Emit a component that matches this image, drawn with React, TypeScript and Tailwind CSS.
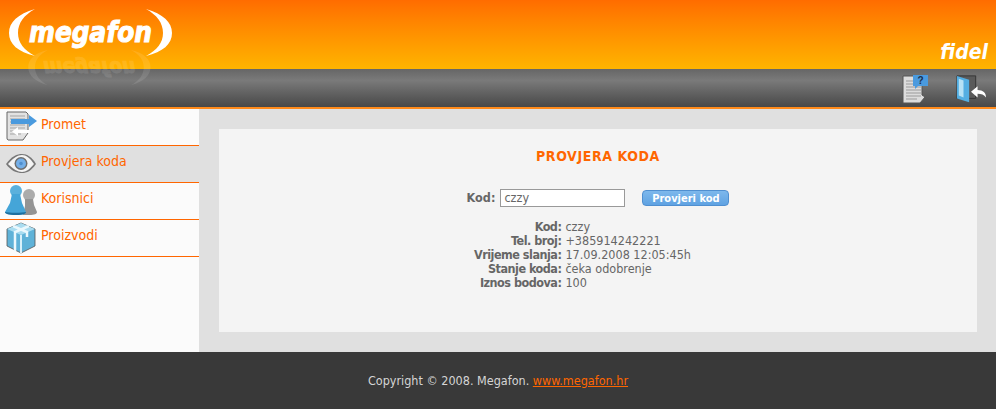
import React from "react";

const PrometIcon = () => (
  <svg width="32" height="32" viewBox="0 0 32 32">
    <path d="M2 1h19l2 2v19l-5 7H3a2 2 0 0 1-1-2z" fill="#e2e2e2" stroke="#666" strokeWidth="1" />
    <path d="M5 5h15M5 8h15M5 11h15M5 14h15M5 17h15M5 20h15M5 23h11" stroke="#a5a5a5" strokeWidth="1" />
    <path d="M7 9h18V5l8 6-8 6v-3H7z" fill="#4a9ade" transform="translate(-1 -1)" />
    <path d="M24 19H13v-3l-6 4.500 6 4.500v-3h11z" fill="#fff" />
  </svg>
);

const EyeIcon = () => (
  <svg width="32" height="22" viewBox="0 0 32 22">
    <path d="M1 11C7 3 12 1 17 1s10 3 14 10c-5 7-9 9-14 9S6 18 1 11z" fill="#777" />
    <path d="M3 11c5-6 10-9 14-9s8 3 12 9c-4 5-8 8-12 8s-9-3-14-8z" fill="#f4f4f4" />
    <circle cx="16" cy="10.500" r="6.500" fill="#6e6e6e" />
    <circle cx="16" cy="10.500" r="5" fill="#74afe8" />
    <circle cx="16" cy="10.500" r="1.800" fill="#4f8fce" />
  </svg>
);

const UsersIcon = () => (
  <svg width="32" height="32" viewBox="0 0 32 32">
    <circle cx="24" cy="10" r="6" fill="#ababab" />
    <path d="M20 14h8l1 6 3 7c0 2-2 3-8 3h-6l2-9z" fill="#949494" />
    <circle cx="11" cy="6" r="6" fill="#5ab0dc" />
    <path d="M7 9h8l2 9 4 9c0 2-3 3-10 3S0 29 0 27l5-9z" fill="#45a5d8" />
    <path d="M0 27c0 2 4 3 11 3s10-1 10-3c-3 1-18 1-21 0z" fill="#1d6f9f" />
  </svg>
);

const BoxIcon = () => (
  <svg width="32" height="32" viewBox="0 0 32 32">
    <path d="M16 1l14 6v17l-14 7-14-7V7z" fill="#5fb2d8" stroke="#555" strokeWidth="0.800" />
    <path d="M16 1l14 6-14 6L2 7z" fill="#a9dcf0" />
    <path d="M16 13v18" stroke="#d9f1fa" strokeWidth="2" />
    <path d="M8 4l14 6v5M24 4L10 10v19" stroke="#eaf8fd" strokeWidth="2.500" fill="none" />
  </svg>
);

const HelpIcon = () => (
  <svg width="26" height="30" viewBox="0 0 26 30">
    <path d="M1 2h19v19l3 2-5 6H1z" fill="#dcdcdc" stroke="#555" strokeWidth="1" />
    <path d="M4 7h8M4 10h8M4 13h15M4 16h15M4 19h15M4 22h15M4 25h11" stroke="#9a9a9a" strokeWidth="1" />
    <path d="M11 1h15v11H16l-3 3v-3h-2z" fill="#4a9ade" />
    <text x="18.500" y="10" fontSize="10" fontWeight="700" fill="#1c2f4c" textAnchor="middle" fontFamily="'Liberation Sans', sans-serif">?</text>
  </svg>
);

const ExitIcon = () => (
  <svg width="30" height="30" viewBox="0 0 32 30">
    <path d="M1 1h20v24H1z" fill="#5a5a5a" stroke="#333" strokeWidth="1" />
    <path d="M1 1l13 4v24L1 25z" fill="#53aee2" />
    <path d="M3 4l5 2v18l-5-2z" fill="#b6e2f6" />
    <path d="M32 24c0-5-3-8-9-8v-4l-7 6 7 6v-4c4 0 7 1 9 4z" fill="#fff" />
  </svg>
);

const Logo = ({ className }: { className: string }) => (
  <svg width="180" height="64" viewBox="0 0 180 64" className={className}>
    <path d="M35 9C18 14 9 22 9 33s9 19 26 23C24 50 18 43 18 33S24 15 35 9z" fill="#fff" />
    <path d="M146 9c17 5 26 13 26 24s-9 19-26 23c11-6 17-13 17-23s-6-18-17-24z" fill="#fff" />
    <text
      x="29"
      y="42"
      fontSize="29"
      fontWeight="700"
      fontStyle="italic"
      fill="#fff"
      stroke="#fff"
      strokeWidth="1"
      textLength="123"
      lengthAdjust="spacingAndGlyphs"
      fontFamily="'DejaVu Sans Condensed', 'DejaVu Sans', sans-serif"
    >
      megafon
    </text>
  </svg>
);

const menu = [
  { label: "Promet", icon: <PrometIcon />, active: false },
  { label: "Provjera koda", icon: <EyeIcon />, active: true },
  { label: "Korisnici", icon: <UsersIcon />, active: false },
  { label: "Proizvodi", icon: <BoxIcon />, active: false },
];

const details = [
  ["Kod:", "czzy"],
  ["Tel. broj:", "+385914242221"],
  ["Vrijeme slanja:", "17.09.2008 12:05:45h"],
  ["Stanje koda:", "čeka odobrenje"],
  ["Iznos bodova:", "100"],
];

export default function App() {
  return (
    <div className="relative flex h-[409px] w-[996px] flex-col overflow-hidden font-['DejaVu_Sans_Condensed','DejaVu_Sans',sans-serif] text-[12.5px] text-[#666]">
      {/* Header */}
      <div className="relative h-[69px] shrink-0 bg-gradient-to-b from-[#ff6c00] to-[#ffb400]">
        <Logo className="block" />
        <span className="absolute right-[8px] top-[42px] text-[21px] font-bold italic leading-none text-white">
          fidel
        </span>
      </div>

      {/* Toolbar */}
      <div className="flex h-[40px] shrink-0 items-start justify-end gap-[28px] border-b-2 border-[#ff8a1a] bg-gradient-to-b from-[#666] via-[#7a7a7a] via-30% to-[#484848] pr-[10px] pt-[5px]">
        <HelpIcon />
        <ExitIcon />
      </div>

      {/* faded reflection of the logo */}
      <Logo className="absolute left-[14px] top-[44px] h-[48px] w-[150px] -scale-y-100 opacity-10" />

      {/* Body */}
      <div className="flex min-h-0 flex-1">
        <nav className="w-[199px] shrink-0 bg-[#fbfbfb]">
          {menu.map((item) => (
            <a
              key={item.label}
              href="#"
              className={`flex h-[37px] items-center border-b border-[#ff6600] text-[14px] text-[#ff6600] ${item.active ? "bg-[#e0e0e0]" : ""}`}
            >
              <span className="flex w-[41px] shrink-0 justify-center pl-[1px]">{item.icon}</span>
              <span className="-mt-[6px]">{item.label}</span>
            </a>
          ))}
        </nav>

        <main className="flex-1 bg-[#e0e0e0] pl-[20px] pr-[19px] pt-[20px]">
          <section className="flex h-[203px] flex-col items-center bg-[#f4f4f4] pt-[18px]">
            <h1 className="text-[14px] font-bold leading-[18px] tracking-[0.6px] text-[#ff6600]">PROVJERA KODA</h1>

            <form className="mt-[23px] flex h-[20px] items-center">
              <label className="mr-[5px] font-bold">Kod:</label>
              <input
                defaultValue="czzy"
                className="h-[18px] w-[125px] border border-[#999] bg-white px-[3px] text-[12.5px] text-[#666] outline-none"
              />
              <button
                type="button"
                className="ml-[17px] h-[16px] w-[87px] rounded-[4px] border border-[#4f8fd0] bg-gradient-to-b from-[#7db8ec] to-[#5fa2e2] text-[11px] font-bold leading-none text-white"
              >
                Provjeri kod
              </button>
            </form>

            <dl className="mt-[12px] grid grid-cols-[auto_auto] gap-x-[4px] self-start pl-[255px] leading-[14px]">
              {details.map(([k, v]) => (
                <React.Fragment key={k}>
                  <dt className="text-right font-bold tracking-[-0.5px]">{k}</dt>
                  <dd>{v}</dd>
                </React.Fragment>
              ))}
            </dl>
          </section>
        </main>
      </div>

      {/* Footer */}
      <footer className="flex h-[57px] shrink-0 items-center justify-center bg-[#393939] pt-[1px] text-[#d5d5d5]">
        <span>
          Copyright © 2008. Megafon.{" "}
          <a href="#" className="text-[#ff6600] underline">
            www.megafon.hr
          </a>
        </span>
      </footer>
    </div>
  );
}
